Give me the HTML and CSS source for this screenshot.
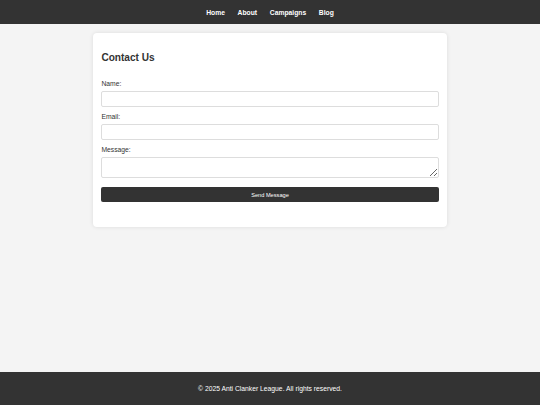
FILE: index.html
```html
<!DOCTYPE html>
<html lang="en">
<head>
    <meta charset="UTF-8">
    <meta name="viewport" content="width=device-width, initial-scale=1.0">
    <title>Contact Us - Anti Clanker League</title>
    <link rel="stylesheet" href="styles.css">
</head>
<body>
    <header class="site-header">
        <nav class="nav">
            <a href="#">Home</a>
            <a href="#">About</a>
            <a href="#">Campaigns</a>
            <a href="#">Blog</a>
        </nav>
    </header>

    <main class="main">
        <div class="card">
            <h2>Contact Us</h2>
            <form class="contact-form">
                <div class="form-group">
                    <label for="name">Name:</label>
                    <input type="text" id="name" name="name">
                </div>
                <div class="form-group">
                    <label for="email">Email:</label>
                    <input type="email" id="email" name="email">
                </div>
                <div class="form-group">
                    <label for="message">Message:</label>
                    <textarea id="message" name="message"></textarea>
                </div>
                <button type="submit" class="send-btn">Send Message</button>
            </form>
        </div>
    </main>

    <footer class="site-footer">
        <p>&copy; 2025 Anti Clanker League. All rights reserved.</p>
    </footer>
</body>
</html>
```

FILE: styles.css
```css
* {
    margin: 0;
    padding: 0;
    box-sizing: border-box;
}

body {
    font-family: 'Liberation Sans', Arial, sans-serif;
    background: #f4f4f4;
    color: #333;
    min-height: 100vh;
    display: flex;
    flex-direction: column;
}

.site-header {
    background: #333;
    height: 24px;
    display: flex;
    align-items: center;
    justify-content: center;
}

.nav {
    display: flex;
    gap: 12.7px;
}

.nav a {
    color: #fff;
    text-decoration: none;
    font-weight: bold;
    font-size: 6.75px;
}

.main {
    flex: 1;
}

.card {
    width: 354px;
    margin: 9px auto 0;
    background: #fff;
    border-radius: 4px;
    box-shadow: 0 0 4px rgba(0, 0, 0, 0.1);
    padding: 8.4px 8.4px 24.6px;
}

.card h2 {
    font-size: 10.1px;
    font-weight: bold;
    color: #333;
    margin: 10.6px 0 17px;
}

.form-group {
    margin-bottom: 6px;
}

.form-group label {
    display: block;
    font-size: 6.75px;
    color: #333;
    margin-bottom: 4.4px;
}

.form-group input,
.form-group textarea {
    display: block;
    width: 100%;
    height: 15.4px;
    border: 1px solid #ddd;
    border-radius: 2px;
    background: #fff;
    font-family: inherit;
    font-size: 6.75px;
}

.form-group textarea {
    height: 21.5px;
    resize: vertical;
}

.send-btn {
    display: block;
    width: 100%;
    height: 15px;
    margin-top: 9px;
    background: #333;
    color: #fff;
    border: none;
    border-radius: 2px;
    font-family: inherit;
    font-size: 5.65px;
    cursor: pointer;
}

.site-footer {
    background: #333;
    color: #fff;
    height: 33px;
    display: flex;
    align-items: center;
    justify-content: center;
    font-size: 6.75px;
}
```
